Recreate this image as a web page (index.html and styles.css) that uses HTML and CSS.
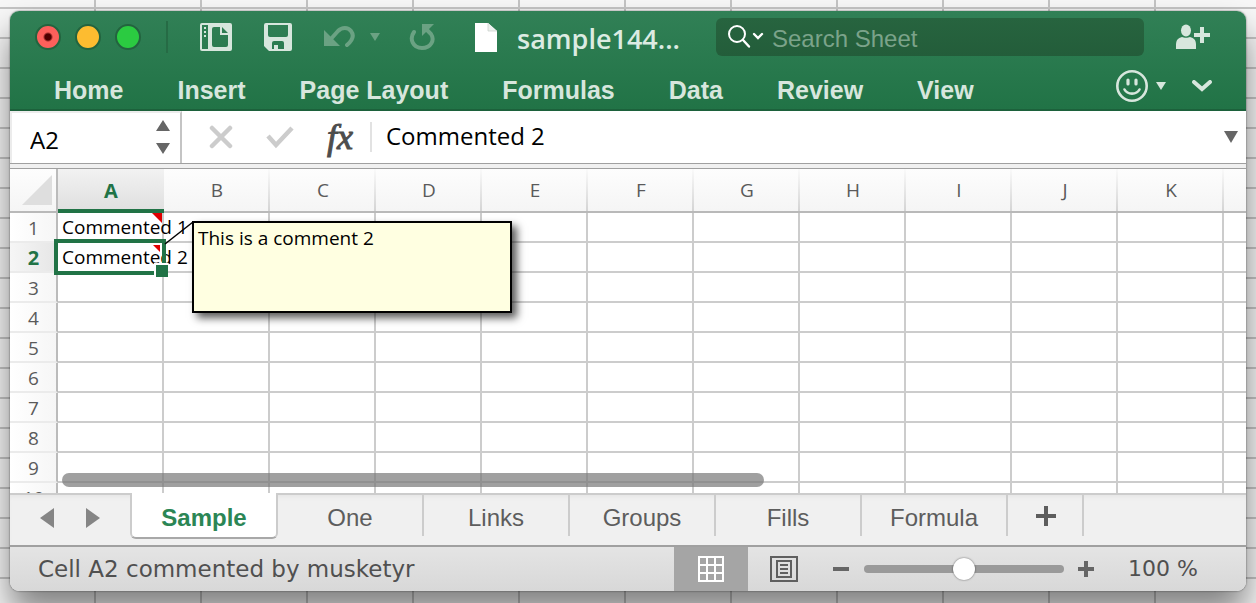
FILE: index.html
```
<!DOCTYPE html>
<html lang="en">
<head>
<meta charset="utf-8">
<title>sample144</title>
<link rel="stylesheet" href="styles.css">
</head>
<body>
<div class="window">
  <header class="ribbon">
    <div class="titlebar">
      <div class="lights">
        <button class="light light-close" aria-label="Close"></button>
        <button class="light light-min" aria-label="Minimize"></button>
        <button class="light light-max" aria-label="Zoom"></button>
      </div>
      <span class="title-rule"></span>
      <div class="quick">
        <button class="icon-btn" aria-label="Gallery">
          <svg width="32" height="28" viewBox="0 0 32 28"><path fill="#d7e6dd" fill-rule="evenodd" d="M2 0h28a2 2 0 0 1 2 2v24a2 2 0 0 1-2 2H2a2 2 0 0 1-2-2V2a2 2 0 0 1 2-2zM2 2v24h6V2zM14 4a2 2 0 0 0-2 2v16a2 2 0 0 0 2 2h12a2 2 0 0 0 2-2V12h-8V4zM22 4v6h6z"/><path fill="#d7e6dd" d="M4 4h2v2H4zM4 8h2v2H4zM4 12h2v2H4z"/></svg>
        </button>
        <button class="icon-btn" aria-label="Save">
          <svg width="28" height="28" viewBox="0 0 28 28"><path fill="#d7e6dd" fill-rule="evenodd" d="M2 0h24a2 2 0 0 1 2 2v24a2 2 0 0 1-2 2H5l-5-5V2a2 2 0 0 1 2-2zM4 2v10a2 2 0 0 0 2 2h16a2 2 0 0 0 2-2V2zM10 18a2 2 0 0 0-2 2v6h2v-4h4v4h6v-6a2 2 0 0 0-2-2z"/></svg>
        </button>
        <button class="icon-btn undo" aria-label="Undo">
          <svg width="32" height="22" viewBox="0 0 32 22"><path fill="#6ba283" d="M1 4v16h16z"/><path fill="none" stroke="#6ba283" stroke-width="4" stroke-linecap="round" d="M7 14l8-9c4-4 10-4 13 0 3 4 2 9-4 14"/></svg>
          <svg width="10" height="8" viewBox="0 0 10 8"><path fill="#6ba283" d="M0 0h10L5 8z"/></svg>
        </button>
        <button class="icon-btn" aria-label="Redo">
          <svg width="26" height="28" viewBox="0 0 26 28"><path fill="#6ba283" d="M13 1h12L13 13z"/><path fill="none" stroke="#6ba283" stroke-width="4" stroke-linecap="round" d="M5 9c-5 7-1 16 8 16 9 0 13-8 9-14l-4-4"/></svg>
        </button>
      </div>
      <svg class="doc-icon" width="22" height="29" viewBox="0 0 22 29"><path fill="#fff" d="M0 0h13l9 8v21H0z"/><path fill="#eef1ef" stroke="#c5cec9" stroke-width=".7" d="M13 0v8h9"/></svg>
      <h1 class="doc-title">sample144...</h1>
      <div class="search">
        <svg width="36" height="24" viewBox="0 0 36 24" fill="none" stroke="#fff" stroke-linecap="round"><circle cx="9" cy="9" r="8" stroke-width="2"/><path stroke-width="2.4" d="M15 15l6 6.500M26 9l4 4 4-4"/></svg>
        <input class="search-input" type="text" placeholder="Search Sheet" aria-label="Search Sheet">
      </div>
      <button class="icon-btn" aria-label="Share">
        <svg width="34" height="26" viewBox="0 0 34 26" fill="#d7e6dd"><ellipse cx="10" cy="6.500" rx="5" ry="6"/><path d="M0 25v-4c0-5 2-7 6-8 2 1 6 1 8 0 4 1 6 3 6 8v4zM24 3h4v6h6v4h-6v6h-4v-6h-6V9h6z"/></svg>
      </button>
    </div>
    <nav class="menu">
      <a class="menu-item" href="#home">Home</a>
      <a class="menu-item" href="#insert">Insert</a>
      <a class="menu-item" href="#layout">Page Layout</a>
      <a class="menu-item" href="#formulas">Formulas</a>
      <a class="menu-item" href="#data">Data</a>
      <a class="menu-item" href="#review">Review</a>
      <a class="menu-item" href="#view">View</a>
      <div class="menu-tools">
        <button class="icon-btn smile" aria-label="Feedback">
          <svg width="32" height="32" viewBox="0 0 32 32" fill="none" stroke="#d7e6dd" stroke-linecap="round"><circle cx="16" cy="16" r="14.700" stroke-width="2.600"/><path stroke-width="3.200" d="M12 10v4M20 10v4"/><path stroke-width="2.600" d="M8.500 19.500c3 5.500 12 5.500 15 0"/></svg>
          <svg width="10" height="8" viewBox="0 0 10 8"><path fill="#d7e6dd" d="M0 0h10L5 8z"/></svg>
        </button>
        <button class="icon-btn" aria-label="Collapse ribbon">
          <svg width="20" height="12" viewBox="0 0 20 12"><path fill="none" stroke="#d7e6dd" stroke-width="4" stroke-linecap="round" d="M2 2l8 7 8-7"/></svg>
        </button>
      </div>
    </nav>
  </header>

  <section class="formula-bar">
    <div class="name-box">
      <input class="name-input" type="text" value="A2" aria-label="Name box">
      <button class="icon-btn" aria-label="Choose name">
        <svg width="14" height="34" viewBox="0 0 14 34" fill="#666"><path d="M0 11L7 0l7 11zM0 23h14L7 34z"/></svg>
      </button>
    </div>
    <div class="entry-tools">
      <button class="icon-btn" aria-label="Cancel">
        <svg width="24" height="24" viewBox="0 0 24 24"><path stroke="#ccc" stroke-width="4.500" stroke-linecap="round" d="M3 3l18 18M21 3L3 21"/></svg>
      </button>
      <button class="icon-btn" aria-label="Enter">
        <svg width="28" height="24" viewBox="0 0 28 24"><path fill="none" stroke="#ccc" stroke-width="4.500" d="M2 11l8 9L26 3"/></svg>
      </button>
      <button class="fx" aria-label="Insert function">fx</button>
    </div>
    <input class="formula-input" type="text" value="Commented 2" aria-label="Formula">
    <button class="icon-btn" aria-label="Expand formula bar">
      <svg width="14" height="12" viewBox="0 0 14 12"><path fill="#666" d="M0 0h14L7 12z"/></svg>
    </button>
  </section>

  <main class="sheet">
    <table class="grid">
      <colgroup><col class="col-num"><col class="col"><col class="col"><col class="col"><col class="col"><col class="col"><col class="col"><col class="col"><col class="col"><col class="col"><col class="col"><col class="col"><col></colgroup>
      <thead>
        <tr><th class="corner"><svg width="30" height="30" viewBox="0 0 30 30"><path fill="#dedede" d="M30 0v30H0z"/></svg></th><th class="current">A</th><th>B</th><th>C</th><th>D</th><th>E</th><th>F</th><th>G</th><th>H</th><th>I</th><th>J</th><th>K</th><th></th></tr>
      </thead>
      <tbody>
        <tr><th>1</th><td>Commented 1<span class="flag flag-large"></span></td><td></td><td></td><td></td><td></td><td></td><td></td><td></td><td></td><td></td><td></td><td></td></tr>
        <tr><th class="current">2</th><td>Commented 2<span class="flag"></span><span class="selection"></span>
          <svg class="leader" width="30" height="24" viewBox="0 0 30 24"><path stroke="#000" stroke-width="1.500" d="M1 23L29 1"/></svg>
          <span class="comment">This is a comment 2</span></td><td></td><td></td><td></td><td></td><td></td><td></td><td></td><td></td><td></td><td></td><td></td></tr>
        <tr><th>3</th><td></td><td></td><td></td><td></td><td></td><td></td><td></td><td></td><td></td><td></td><td></td><td></td></tr>
        <tr><th>4</th><td></td><td></td><td></td><td></td><td></td><td></td><td></td><td></td><td></td><td></td><td></td><td></td></tr>
        <tr><th>5</th><td></td><td></td><td></td><td></td><td></td><td></td><td></td><td></td><td></td><td></td><td></td><td></td></tr>
        <tr><th>6</th><td></td><td></td><td></td><td></td><td></td><td></td><td></td><td></td><td></td><td></td><td></td><td></td></tr>
        <tr><th>7</th><td></td><td></td><td></td><td></td><td></td><td></td><td></td><td></td><td></td><td></td><td></td><td></td></tr>
        <tr><th>8</th><td></td><td></td><td></td><td></td><td></td><td></td><td></td><td></td><td></td><td></td><td></td><td></td></tr>
        <tr><th>9</th><td></td><td></td><td></td><td></td><td></td><td></td><td></td><td></td><td></td><td></td><td></td><td></td></tr>
        <tr><th>10</th><td></td><td></td><td></td><td></td><td></td><td></td><td></td><td></td><td></td><td></td><td></td><td></td></tr>
      </tbody>
    </table>
    <div class="scroll-track"><div class="scroll-thumb"></div></div>
  </main>

  <nav class="tabs">
    <div class="tab-arrows">
      <button class="icon-btn" aria-label="Previous sheet"><svg width="14" height="20" viewBox="0 0 14 20"><path fill="#858585" d="M14 0v20L0 10z"/></svg></button>
      <button class="icon-btn" aria-label="Next sheet"><svg width="14" height="20" viewBox="0 0 14 20"><path fill="#858585" d="M0 0l14 10L0 20z"/></svg></button>
    </div>
    <a class="tab tab-active" href="#sample">Sample</a>
    <a class="tab" href="#one">One</a>
    <a class="tab" href="#links">Links</a>
    <a class="tab" href="#groups">Groups</a>
    <a class="tab" href="#fills">Fills</a>
    <a class="tab" href="#formula">Formula</a>
    <button class="tab tab-add" aria-label="Add sheet"><svg width="20" height="20" viewBox="0 0 20 20"><path fill="#5d5d5d" d="M8 0h4v8h8v4h-8v8H8v-8H0V8h8z"/></svg></button>
  </nav>

  <footer class="status">
    <span class="status-text">Cell A2 commented by musketyr</span>
    <button class="view-btn view-active" aria-label="Normal view">
      <svg width="26" height="26" viewBox="0 0 26 26"><path fill="none" stroke="#fff" stroke-width="2" d="M1 1h24v24H1zM9 1v24M17 1v24M1 9h24M1 17h24"/></svg>
    </button>
    <button class="view-btn" aria-label="Page layout view">
      <svg width="28" height="26" viewBox="0 0 28 26"><path fill="none" stroke="#5f5f5f" stroke-width="2" d="M1 1h26v24H1zM7 5h14v16H7zM10 9h8M10 13h8M10 17h8"/></svg>
    </button>
    <div class="zoom">
      <button class="icon-btn" aria-label="Zoom out"><svg width="18" height="16" viewBox="0 0 18 16"><path fill="#666" d="M1 6h16v4H1z"/></svg></button>
      <input class="slider" type="range" min="0" max="200" value="100" aria-label="Zoom">
      <button class="icon-btn" aria-label="Zoom in"><svg width="16" height="16" viewBox="0 0 16 16"><path fill="#666" d="M6 0h4v6h6v4h-6v6H6v-6H0V6h6z"/></svg></button>
    </div>
    <span class="zoom-value">100 %</span>
  </footer>
</div>
</body>
</html>
```
FILE: styles.css
```
* { box-sizing: border-box; }

body {
  margin: 0;
  height: 100vh;
  display: flex;
  padding: 11px 10px 12px;
  overflow: hidden;
  background-color: #f7f7f7;
  background-image:
    linear-gradient(#c4c4c4, #c4c4c4 2px, transparent 2px),
    linear-gradient(90deg, #c4c4c4, #c4c4c4 2px, transparent 2px);
  background-size: 106px 30px;
  background-position: 94px 7px;
  font-family: "Open Sans", "Noto Sans", sans-serif;
}

button { border: 0; padding: 0; background: none; font: inherit; color: inherit; }
input { border: 0; padding: 0; margin: 0; background: none; outline: 0; min-width: 0; }
a { text-decoration: none; color: inherit; }
svg { display: block; flex: none; }
.icon-btn { display: flex; align-items: center; flex: none; }

.window {
  flex: 1;
  min-width: 0;
  display: flex;
  flex-direction: column;
  overflow: hidden;
  border-radius: 9px;
  background: #fff;
  box-shadow: 0 0 2px rgba(0, 0, 0, .6), 0 22px 34px rgba(0, 0, 0, .48);
}

/* Ribbon */
.ribbon {
  flex: none;
  background: linear-gradient(#318056, #217346);
  border-bottom: 2px solid #1c613b;
}
.titlebar { display: flex; align-items: center; height: 52px; padding: 0 36px 0 25px; }
.lights { display: flex; gap: 14px; }
.light { width: 26px; height: 26px; border-radius: 50%; border: 2px solid #23643f; }
.light-close { background: radial-gradient(circle, #4d0000 0 3px, #fc605b 5px); }
.light-min { background: #fdbc30; }
.light-max { background: #2bcb41; }
.title-rule { width: 2px; height: 32px; margin: 0 32px 0 25px; background: #266b45; }
.quick { display: flex; align-items: center; gap: 32px; }
.quick .icon-btn:nth-child(2) { margin-right: -1px; }
.undo { gap: 15px; }
.undo + .icon-btn { margin-left: -3px; }
.doc-icon { margin: 0 20px 0 40px; }
.doc-title {
  margin: 0;
  width: 199px;
  font-size: 27px;
  line-height: 36px;
  padding-top: 3px;
  font-weight: 600;
  color: #dcebe2;
}
.search {
  flex: 1;
  min-width: 0;
  display: flex;
  align-items: center;
  gap: 8px;
  height: 38px;
  padding: 0 12px;
  margin-right: 32px;
  border-radius: 6px;
  background: linear-gradient(#27643f, #235d3a);
}
.search-input {
  flex: 1;
  padding-top: 3px;
  font: 24px/32px "Liberation Sans", sans-serif;
  color: #fff;
}
.search-input::placeholder { color: #7ba38a; opacity: 1; }

.menu {
  display: flex;
  align-items: center;
  gap: 54px;
  height: 46px;
  padding: 0 34px 0 44px;
  font: bold 25px/34px "Liberation Sans", sans-serif;
  color: #d7e6dd;
}
.menu-item { padding-top: 8px; }
.menu-tools { display: flex; align-items: center; gap: 26px; margin-left: auto; }
.smile { gap: 8px; }

/* Formula bar */
.formula-bar {
  flex: none;
  display: flex;
  align-items: center;
  height: 53px;
  padding-right: 8px;
  border-bottom: 1px solid #a0a0a0;
}
.name-box {
  display: flex;
  align-items: center;
  align-self: stretch;
  width: 172px;
  padding: 0 10px 2px 18px;
  border: solid #ececec;
  border-width: 2px 2px 0 2px;
  border-right: 2px solid #c4c4c4;
}
.name-input { flex: 1; font: 24px/34px "Open Sans", sans-serif; padding-top: 5px; }
.entry-tools {
  display: flex;
  align-items: center;
  gap: 33px;
  height: 30px;
  padding: 0 17px 0 27px;
  border-right: 2px solid #e2e2e2;
}
.fx {
  font: italic 36px/28px "Liberation Serif", serif;
  -webkit-text-stroke: 1px #4d4d4d;
  color: #4d4d4d;
}
.formula-input { flex: 1; padding: 0 0 2px 14px; font: 24px/34px "Open Sans", sans-serif; }

/* Cells */
.sheet {
  flex: 1;
  min-height: 0;
  position: relative;
  overflow: hidden;
  margin-top: 4px;
  border-top: 1px solid #a0a0a0;
  box-shadow: 0 -4px #f0f0f0;
}
.grid {
  width: 100%;
  table-layout: fixed;
  border-collapse: separate;
  border-spacing: 0;
  font-size: 19px;
  line-height: 26px;
}
.col-num { width: 48px; }
.col { width: 106px; }
.grid th, .grid td { padding: 0; }
.grid thead th {
  height: 44px;
  border-bottom: 2px solid #b9b9b9;
  background:
    linear-gradient(#fafafa, #d4d4d4) right / 2px 100% no-repeat,
    linear-gradient(#fdfdfd, #f5f5f5);
  color: #5a5a5a;
  font-weight: 400;
}
.grid thead th:last-child { background: linear-gradient(#fdfdfd, #f5f5f5); }
.grid thead .corner {
  padding: 0 0 0 12px;
  border-right: 2px solid #bbb;
  background: linear-gradient(#fdfdfd, #f5f5f5);
}
.grid thead .current {
  padding-top: 4px;
  border-bottom: 4px solid #217346;
  background: linear-gradient(#f2f2f2, #e0e0e0);
}
.grid .current { color: #217346; font-weight: 700; font-size: 20px; }
.grid tbody th {
  height: 30px;
  padding: 1px 0 0 1px;
  border-right: 2px solid #bbb;
  border-bottom: 2px solid #ebebeb;
  background: linear-gradient(90deg, #fff, #f6f6f6);
  color: #5a5a5a;
  font-weight: 400;
}
.grid tbody .current { color: #217346; font-weight: 700; background: linear-gradient(90deg, #f6f6f6, #e6e6e6); }
.grid td {
  position: relative;
  height: 30px;
  padding-left: 4px;
  border-right: 2px solid #ccc;
  border-bottom: 2px solid #ccc;
  line-height: 28px;
  white-space: nowrap;
}
.grid td:last-child { border-right: 0; }
.flag {
  position: absolute;
  top: 2px;
  right: 2px;
  width: 7px;
  height: 7px;
  background: #e00000;
  clip-path: polygon(0 0, 100% 0, 100% 100%);
}
.flag-large { top: 0; right: 0; width: 10px; height: 10px; }
.selection {
  position: absolute;
  z-index: 1;
  inset: -4px;
  border: 4px solid #217346;
}
.selection::after {
  content: "";
  position: absolute;
  right: -6px;
  bottom: -6px;
  width: 12px;
  height: 12px;
  background: #217346;
  border: solid #fff;
  border-width: 2px 0 0 2px;
}
.leader { position: absolute; left: 106px; top: -22px; z-index: 2; }
.comment {
  position: absolute;
  z-index: 2;
  left: 134px;
  top: -22px;
  width: 320px;
  height: 92px;
  padding: 1px 4px;
  border: 2px solid #000;
  background: #ffffe1;
  box-shadow: 5px 5px 8px rgba(0, 0, 0, .65);
}
.scroll-track { position: absolute; left: 52px; right: 0; bottom: 6px; height: 14px; }
.scroll-thumb { width: 59.300%; height: 14px; border-radius: 7px; background: rgba(120, 120, 120, .7); }

/* Sheet tabs */
.tabs {
  flex: none;
  display: flex;
  height: 54px;
  background: #f0f0f0;
  box-shadow: inset 0 2px #ccc, inset 0 6px 4px -2px #e6e6e6;
  border-bottom: 2px solid #a0a0a0;
  font: 24px/48px "Liberation Sans", sans-serif;
  color: #5d5d5d;
}
.tab-arrows { display: flex; align-items: center; gap: 32px; width: 120px; padding: 0 0 2px 30px; }
.tab { width: 146px; height: 43px; padding-top: 1px; border-right: 2px solid #ccc; text-align: center; }
.tab-active {
  width: 148px;
  height: 46px;
  border: 2px solid #ccc;
  border-top: 0;
  border-bottom-color: #a8a8a8;
  border-radius: 0 0 6px 6px;
  background: #fff;
  color: #2b8655;
  font-weight: 700;
}
.tab-add { display: flex; align-items: center; justify-content: center; width: 76px; padding: 2px 0 0 2px; }

/* Status bar */
.status {
  flex: none;
  display: flex;
  align-items: center;
  height: 44px;
  padding: 0 48px 0 28px;
  background: linear-gradient(#e4e4e4, #d8d8d8);
  font: 23px/32px "DejaVu Sans", sans-serif;
  color: #505050;
}
.status-text { flex: 1; white-space: nowrap; }
.view-btn { display: flex; align-items: center; justify-content: center; align-self: stretch; width: 72px; }
.view-active { width: 74px; background: #a5a5a5; }
.zoom { display: flex; align-items: center; gap: 14px; margin: 0 34px 0 12px; }
.slider { appearance: none; width: 200px; height: 24px; }
.slider::-webkit-slider-runnable-track { height: 8px; border-radius: 4px; background: #9a9a9a; }
.slider::-webkit-slider-thumb {
  appearance: none;
  width: 22px;
  height: 22px;
  margin-top: -7px;
  border-radius: 50%;
  background: #fff;
  box-shadow: 0 0 2px rgba(0, 0, 0, .6);
}
.zoom-value { font-size: 22px; white-space: nowrap; }
```
